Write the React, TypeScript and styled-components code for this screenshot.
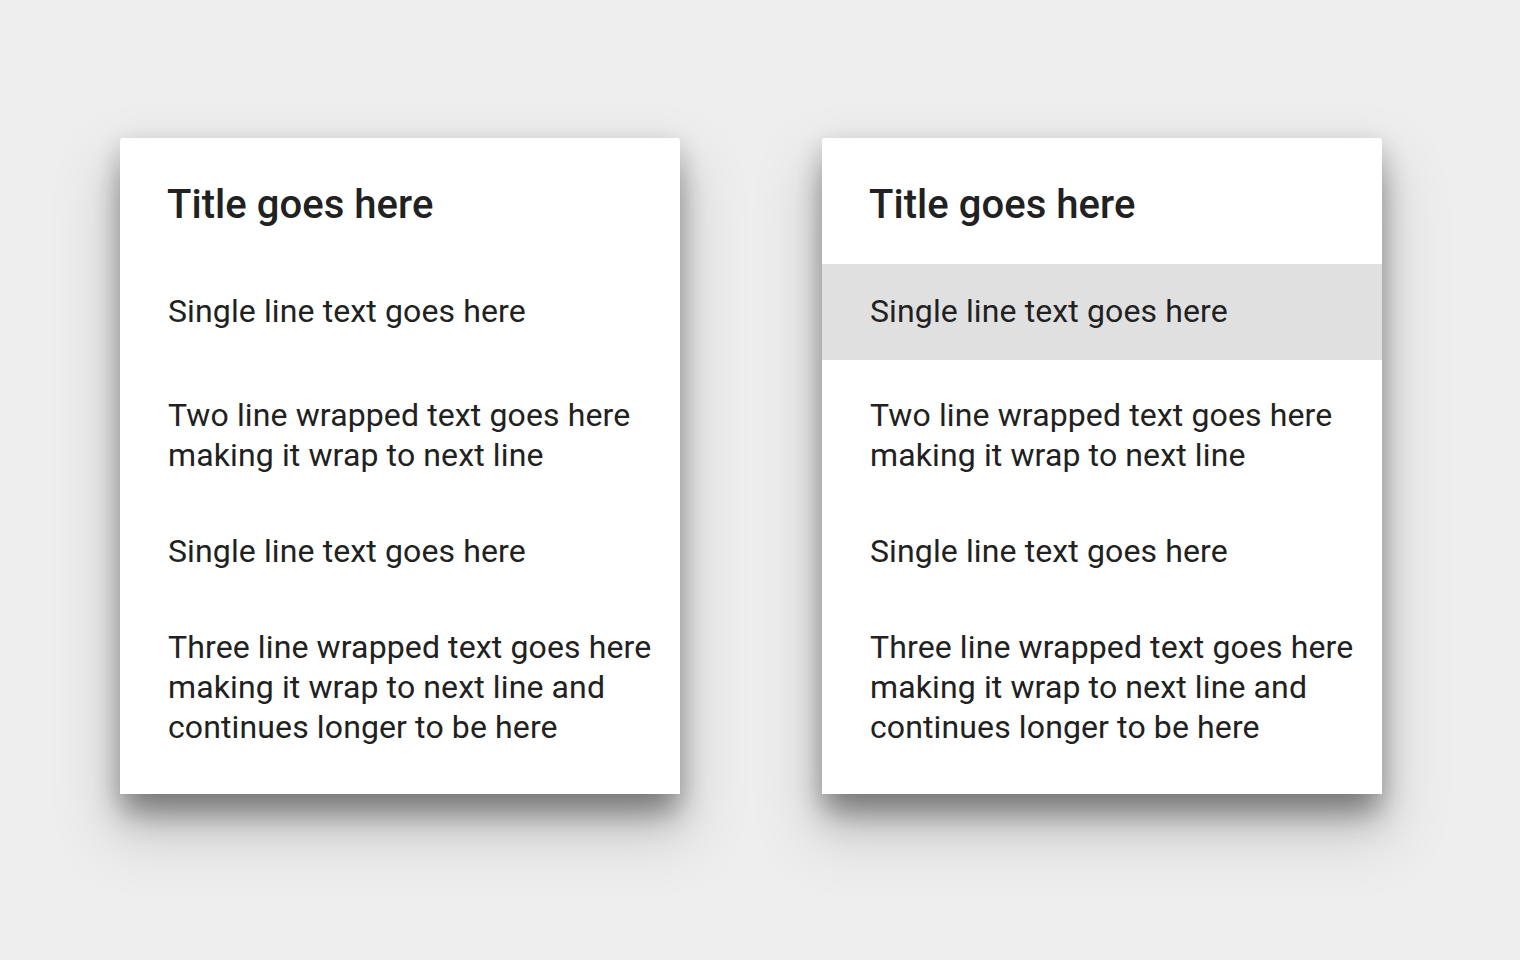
import React, { FC } from 'react';
import styled, { createGlobalStyle } from 'styled-components';

const GlobalStyle = createGlobalStyle`
  html, body {
    margin: 0;
    padding: 0;
    background: #eeeeee;
  }

  body {
    font-family: Roboto, 'Liberation Sans', sans-serif;
    color: #212121;
    -webkit-font-smoothing: antialiased;
  }
`;

const Page = styled.div`
  display: flex;
  align-items: flex-start;
  gap: 142px;
  width: 1520px;
  height: 960px;
  box-sizing: border-box;
  padding: 138px 0 0 120px;
  overflow: hidden;
`;

const Card = styled.div`
  width: 560px;
  background: #ffffff;
  border-radius: 3px 3px 0 0;
  padding-bottom: 26px;
  box-shadow:
    0 26px 30px -4px rgba(0, 0, 0, 0.34),
    0 34px 64px 12px rgba(0, 0, 0, 0.12),
    0 8px 24px 2px rgba(0, 0, 0, 0.14);
`;

const Title = styled.h2`
  margin: 0;
  height: 126px;
  box-sizing: border-box;
  padding: 43px 48px 0 47px;
  font-size: 40px;
  line-height: 48px;
  font-weight: 500;
  letter-spacing: 0.05px;
  color: #212121;
`;

const List = styled.ul`
  list-style: none;
  margin: 0;
  padding: 0;
`;

const Row = styled.li<{ $active?: boolean }>`
  padding: 35px 24px 21px 48px;
  font-size: 32px;
  line-height: 40px;
  font-weight: 400;
  letter-spacing: 0.12px;
  color: #212121;
  background: ${(p) => (p.$active ? '#e0e0e0' : 'transparent')};

  &:first-child {
    padding-top: 27px;
    padding-bottom: 29px;
  }
`;

const items = [
  'Single line text goes here',
  'Two line wrapped text goes here making it wrap to next line',
  'Single line text goes here',
  'Three line wrapped text goes here making it wrap to next line and continues longer to be here',
];

const ListCard: FC<{ activeIndex?: number }> = ({ activeIndex }) => (
  <Card>
    <Title>Title goes here</Title>
    <List>
      {items.map((text, i) => (
        <Row key={i} $active={i === activeIndex}>
          {text}
        </Row>
      ))}
    </List>
  </Card>
);

const App: FC = () => (
  <>
    <GlobalStyle />
    <Page>
      <ListCard />
      <ListCard activeIndex={0} />
    </Page>
  </>
);

export default App;
